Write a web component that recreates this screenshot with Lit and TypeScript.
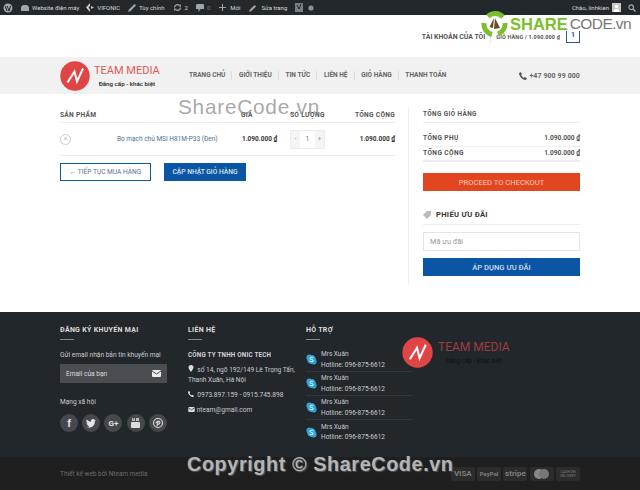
import { LitElement, html, css, svg } from "lit";
import { customElement } from "lit/decorators.js";

const skype = svg`<svg width="11" height="11" viewBox="0 0 11 11"><circle cx="3.4" cy="3.4" r="3" fill="#2ea3dc"/><circle cx="7.6" cy="7.6" r="3" fill="#2ea3dc"/><circle cx="5.5" cy="5.5" r="4.4" fill="#2ea3dc"/><path d="M7.4 3.9C6.7 3.1 3.9 3 3.9 4.4c0 1.4 3.4.8 3.4 2.3 0 1.3-2.9 1.2-3.7.3" fill="none" stroke="#fff" stroke-width="1"/></svg>`;

const nLogo = (size: number) => svg`<svg width=${size} height=${size} viewBox="0 0 30 30"><circle cx="15" cy="15" r="14.7" fill="#e04545"/><path d="M7.5 21.5 14.5 10.5 17 20.5 23 7.5" fill="none" stroke="#fff" stroke-width="2"/></svg>`;

@customElement("app-root")
export class AppRoot extends LitElement {
  static styles = css`
    :host { display: block; position: relative; width: 640px; height: 490px; overflow: hidden; background: #fff; font-family: Roboto, "Liberation Sans", sans-serif; color: #333; }
    * { box-sizing: border-box; }
    .admin { height: 15px; background: #23282d; display: flex; align-items: center; padding: 0 4px 0 3px; color: #d6d9dc; font-size: 6px; white-space: nowrap; }
    .admin .i { display: flex; align-items: center; gap: 3px; }
    .admin svg { display: block; flex: none; }
    .a1 { margin-left: 8px; } .a2 { margin-left: 7px; } .a3 { margin-left: 8px; } .a4 { margin-left: 8px; } .a5 { margin-left: 8px; } .a6 { margin-left: 9px; } .a7 { margin-left: 9px; } .a8 { margin-left: 8px; } .a9 { margin-left: 4px; }
    .g4 { gap: 4px !important; }
    .spacer { flex: 1; }
    .dim { color: #777; }
    .search { margin-left: 7px; }
    .top { height: 42px; display: flex; justify-content: flex-end; align-items: center; padding: 2px 60px 0 0; font-weight: 700; color: #555; gap: 5px; }
    .top .acc { font-size: 6.9px; }
    .top .sep { width: 1px; height: 12px; background: #e5e5e5; }
    .top .cart { font-size: 5.5px; white-space: nowrap; letter-spacing: .15px; }
    .badge { width: 14px; height: 12px; border: 1.5px solid #2a5a8a; border-top: 0; color: #2a5a8a; font-size: 7px; text-align: center; line-height: 9px; margin-left: 1px; }
    .head { height: 37px; background: #f1f1f1; padding: 0 60px; display: flex; align-items: center; }
    .brand { display: flex; gap: 4px; width: 129px; align-items: center; }
    .brand .t { color: #dd5a55; font-size: 11px; line-height: 13px; white-space: nowrap; }
    .brand .s { color: #222; font-size: 6.2px; text-align: center; line-height: 8px; margin-top: 3px; font-weight: 500; white-space: nowrap; }
    .nav { display: flex; flex: 1; font-size: 6.5px; font-weight: 700; color: #666; align-items: center; }
    .nav span { padding-right: 6px; margin-right: 6.7px; border-right: 1px solid #ddd; line-height: 9px; white-space: nowrap; }
    .nav span:last-child { border: 0; }
    .phone { display: flex; align-items: center; gap: 2px; font-size: 7px; font-weight: 700; color: #666; letter-spacing: .1px; white-space: nowrap; }
    .main { height: 218px; padding: 0 60px; display: flex; }
    .cartc { width: 335px; padding-top: 17px; }
    .hrow { display: grid; grid-template-columns: 181px 49px 62px 43px; height: 9px; font-size: 6.6px; font-weight: 700; color: #555; letter-spacing: .3px; line-height: 8px; white-space: nowrap; }
    .hline { height: 1px; border-top: 1.5px solid #ececec; margin-top: 2px; }
    .r { text-align: right; }
    .prow { display: grid; grid-template-columns: 57px 125px 35px 48px 70px; height: 33px; align-items: center; border-bottom: 1px solid #ececec; }
    .x { width: 11px; height: 11px; border: 1px solid #ccc; border-radius: 50%; color: #bbb; font-size: 7px; line-height: 9px; text-align: center; }
    .pname { color: #4f6f8f; white-space: nowrap; font-size: 6.5px; }
    .price { font-weight: 700; color: #333; font-size: 6.5px; white-space: nowrap; }
    .qty { display: flex; height: 19px; width: 35px; margin-left: 13px; border: 1px solid #ececec; color: #777; font-size: 7px; line-height: 17px; text-align: center; }
    .qty i { width: 9px; background: #f5f5f5; font-style: normal; color: #999; }
    .qty b { flex: 1; font-weight: 400; background: #fff; }
    .btns { display: flex; gap: 13px; margin-top: 7px; }
    .btn { height: 18px; display: flex; align-items: center; justify-content: center; white-space: nowrap; }
    .outl { width: 91px; border: 1.5px solid #0a5a9c; color: #5a7490; font-size: 6.6px; }
    .fill { width: 82px; background: #0b56a4; color: #dbe6f2; font-weight: 500; font-size: 6.7px; }
    .side { margin-left: 13px; width: 172px; border-left: 1px solid #ececec; padding: 1px 0 0 14px; height: 176px; margin-top: 14px; }
    .stitle { font-size: 6.4px; font-weight: 700; color: #555; letter-spacing: .4px; line-height: 10px; padding-bottom: 3px; border-bottom: 1.5px solid #ececec; }
    .srow { display: flex; justify-content: space-between; align-items: center; height: 15.5px; font-size: 6.6px; font-weight: 700; color: #555; border-bottom: 1px solid #f2f2f2; }
    .srow.first { margin-top: 8px; }
    .srow span:first-child { letter-spacing: .4px; }
    .srow.last { border-bottom: 2px solid #ececec; }
    .checkout { height: 18px; margin-top: 11px; background: #e24620; color: #f7cdbd; font-size: 7.6px; display: flex; align-items: center; justify-content: center; }
    .coupon { display: flex; align-items: center; gap: 4px; margin-top: 19px; font-size: 7.6px; font-weight: 700; color: #333; letter-spacing: .3px; padding-bottom: 5px; border-bottom: 1.5px solid #ececec; line-height: 9px; }
    .inp { height: 19px; margin-top: 7px; border: 1px solid #e5e5e5; color: #999; font-size: 7.4px; line-height: 17px; padding-left: 6px; }
    .apply { height: 18px; margin-top: 7px; background: #0b56a4; color: #cfdcec; font-size: 7.6px; font-weight: 500; display: flex; align-items: center; justify-content: center; }
    .foot { height: 145px; background: #22272c; padding: 0 60px; display: flex; position: relative; color: #c9cbcd; font-size: 6.6px; }
    .c1 { width: 128px; padding-top: 14px; } .c2 { width: 118px; padding-top: 14px; } .c3 { width: 96px; padding-top: 14px; }
    .ftitle { font-size: 7px; font-weight: 700; color: #ddd; letter-spacing: .3px; line-height: 9px; white-space: nowrap; }
    .bar { width: 14px; height: 1px; background: #888; margin: 4px 0 11px; }
    .bar.tight { margin-bottom: 8px; }
    .lh { line-height: 9px; white-space: nowrap; }
    .lh.gapped { margin-top: 15px; }
    .email { width: 107px; height: 19px; background: #4a4e53; margin-top: 4px; display: flex; align-items: center; justify-content: space-between; padding: 0 6px; color: #ddd; }
    .social { display: flex; gap: 4.2px; margin-top: 7px; }
    .social div { width: 18px; height: 18px; background: #45494e; border-radius: 50%; color: #e4e4e4; display: flex; align-items: center; justify-content: center; font: 700 11px "Liberation Sans", sans-serif; }
    .social .gp { font: 700 8px Roboto, sans-serif; }
    .c2 p { margin: 0 0 5px; line-height: 10px; white-space: nowrap; }
    .co { font-weight: 700; color: #d0d2d4; font-size: 6.3px; letter-spacing: .2px; margin-bottom: 5px; line-height: 9px; }
    .sup { display: flex; gap: 4px; height: 24px; align-items: center; width: 107px; border-bottom: 1px solid #31363b; font-size: 6.5px; line-height: 10.3px; white-space: nowrap; }
    .sup:last-child { border: 0; }
    .flogo { display: flex; align-items: flex-start; gap: 5px; margin-top: 25px; }
    .flogo .t { color: #9f3d40; font-size: 12px; line-height: 14px; margin-top: 3px; white-space: nowrap; }
    .flogo .s { color: #0e1114; font-size: 6.3px; text-align: center; line-height: 8px; margin-top: 3px; white-space: nowrap; }
    .bottom { height: 33px; background: #1f1f1f; padding: 0 60px; display: flex; align-items: center; justify-content: space-between; font-size: 6.5px; color: #6b6b6b; }
    .pays { display: flex; gap: 2.3px; }
    .pays div { width: 24px; height: 14px; background: #2c2c2c; border-radius: 2px; color: #7d7d7d; font-size: 8px; font-weight: 700; display: flex; align-items: center; justify-content: center; }
    .pays .pp { font-size: 6px; }
    .pays .cod { font-size: 3.5px; text-align: center; line-height: 4px; font-weight: 400; }
    .wm1 { position: absolute; left: 178px; top: 95px; font: 400 20.8px "Liberation Sans", sans-serif; letter-spacing: .75px; color: rgba(125,125,125,.68); white-space: nowrap; }
    .wm2 { position: absolute; left: 187px; top: 453px; font: 700 19.9px "Liberation Sans", sans-serif; letter-spacing: .55px; color: #b5b5b5; white-space: nowrap; text-shadow: 1px 1px 1px #555; }
    .wm3 { position: absolute; left: 481px; top: 10px; display: flex; align-items: center; gap: 2px; white-space: nowrap; color: #777; }
    .wm3 b { color: #7cbf2e; font: 700 16.5px "Liberation Sans", sans-serif; }
    .wm3 span { font: 400 15.5px "Liberation Sans", sans-serif; letter-spacing: -.6px; }
  `;

  render() {
    const sup = html`<div class="sup">${skype}<div>Mrs Xuân<br />Hotline: 096-875-6612</div></div>`;
    return html`
      <div class="admin">
        <svg width="10" height="10" viewBox="0 0 10 10"><circle cx="5" cy="5" r="4.5" fill="#a0a5aa"/><path d="M2.2 3 4 8M4.2 3 6 8 7.6 3" stroke="#23282d" fill="none"/></svg>
        <div class="i a1"><svg width="8" height="8" viewBox="0 0 8 8"><path d="M0 7V3l2-2h4l2 2v4z" fill="#a0a5aa"/></svg>Website điện máy</div>
        <div class="i a2"><svg width="8" height="9" viewBox="0 0 8 9"><path d="M4 0 0 4.5 4 9V6.5L2.5 4.5 4 3zM5 3l3 1.5L5 6z" fill="#ccc"/></svg>VIFONIC</div>
        <div class="i a3"><svg width="8" height="8" viewBox="0 0 8 8"><path d="M0 8 1 5.5 6.5 0 8 1.5 2.5 7z" fill="#a0a5aa"/></svg>Tùy chỉnh</div>
        <div class="i a4"><svg width="9" height="9" viewBox="0 0 9 9"><path d="M1.5 4.5a3 3 0 0 1 5-2M7.500 4.5a3 3 0 0 1-5 2" fill="none" stroke="#a0a5aa" stroke-width="1.3"/><path d="M5.5 3.5H8V1zM3.5 5.5H1V8z" fill="#a0a5aa"/></svg>2</div>
        <div class="i a5"><svg width="8" height="8" viewBox="0 0 8 8"><path d="M1 0h6a1 1 0 0 1 1 1v4H4.500L2.500 8V5H0V1z" fill="#a0a5aa"/></svg><span class="dim">0</span></div>
        <div class="i g4 a6"><svg width="7" height="7" viewBox="0 0 7 7"><path d="M3 0h1v3h3v1H4v3H3V4H0V3h3z" fill="#a0a5aa"/></svg>Mới</div>
        <div class="i g4 a7"><svg width="8" height="8" viewBox="0 0 8 8"><path d="M0 8 1 5.500 5.500 1 7 2.500 2.500 7z" fill="#a0a5aa"/></svg>Sửa trang</div>
        <div class="i a8"><svg width="9" height="9" viewBox="0 0 9 9"><rect width="8" height="9" fill="#7a7f84"/><path d="M2 2 4 6 6 1" stroke="#23282d" fill="none"/></svg></div>
        <div class="i a9"><svg width="6" height="6" viewBox="0 0 6 6"><circle cx="3" cy="3" r="2.600" fill="#8a8f94"/></svg></div>
        <div class="spacer"></div>
        <div class="i">Chào, linhkien <svg width="9" height="9" viewBox="0 0 9 9"><rect width="9" height="9" fill="#c8c8c8"/><circle cx="4.500" cy="3.500" r="1.700" fill="#fff"/><path d="M1.500 9a3 3 0 0 1 6 0z" fill="#fff"/></svg></div>
        <svg class="search" width="8" height="8" viewBox="0 0 8 8"><circle cx="3.200" cy="3.200" r="2.300" fill="none" stroke="#a0a5aa" stroke-width="1.200"/><path d="M5 5 7.600 7.600" stroke="#a0a5aa" stroke-width="1.400"/></svg>
      </div>

      <div class="top">
        <span class="acc">TÀI KHOẢN CỦA TÔI</span><span class="sep"></span>
        <span class="cart">GIỎ HÀNG / 1.090.000 ₫</span>
        <span class="badge">1</span>
      </div>

      <div class="head">
        <div class="brand">
          ${nLogo(30)}
          <div><div class="t">TEAM MEDIA</div><div class="s">Đẳng cấp - khác biệt</div></div>
        </div>
        <div class="nav"><span>TRANG CHỦ</span><span>GIỚI THIỆU</span><span>TIN TỨC</span><span>LIÊN HỆ</span><span>GIỎ HÀNG</span><span>THANH TOÁN</span></div>
        <div class="phone"><svg width="8" height="8" viewBox="0 0 8 8"><path d="M1.500 0 3 2 2.200 3.200C2.800 4.400 3.600 5.200 4.800 5.800L6 5 8 6.500 7 8C3.500 8 0 4.500 0 1z" fill="#555"/></svg>+47 900 99 000</div>
      </div>

      <div class="main">
        <div class="cartc">
          <div class="hrow"><span>SẢN PHẨM</span><span>GIÁ</span><span>SỐ LƯỢNG</span><span class="r">TỔNG CỘNG</span></div>
          <div class="hline"></div>
          <div class="prow">
            <div class="x">×</div>
            <div class="pname">Bo mạch chủ MSI H81M-P33 (Đen)</div>
            <div class="price r">1.090.000 ₫</div>
            <div class="qty"><i>-</i><b>1</b><i>+</i></div>
            <div class="price r">1.090.000 ₫</div>
          </div>
          <div class="btns">
            <div class="btn outl">← TIẾP TỤC MUA HÀNG</div>
            <div class="btn fill">CẬP NHẬT GIỎ HÀNG</div>
          </div>
        </div>
        <div class="side">
          <div class="stitle">TỔNG GIỎ HÀNG</div>
          <div class="srow first"><span>TỔNG PHỤ</span><span>1.090.000 ₫</span></div>
          <div class="srow last"><span>TỔNG CỘNG</span><span>1.090.000 ₫</span></div>
          <div class="checkout">PROCEED TO CHECKOUT</div>
          <div class="coupon"><svg width="9" height="8" viewBox="0 0 9 8"><path d="M0 4 4 0h4v4L4 8z" fill="#bbb"/></svg>PHIẾU ƯU ĐÃI</div>
          <div class="inp">Mã ưu đãi</div>
          <div class="apply">ÁP DỤNG ƯU ĐÃI</div>
        </div>
      </div>

      <div class="foot">
        <div class="c1">
          <div class="ftitle">ĐĂNG KÝ KHUYẾN MẠI</div>
          <div class="bar"></div>
          <div class="lh">Gửi email nhận bản tin khuyến mại</div>
          <div class="email"><span>Email của bạn</span><svg width="9" height="7" viewBox="0 0 9 7"><rect width="9" height="7" rx="1" fill="#eee"/><path d="M0 1 4.500 4 9 1" stroke="#4a4e53" fill="none"/></svg></div>
          <div class="lh gapped">Mạng xã hội</div>
          <div class="social">
            <div>f</div>
            <div><svg width="10" height="9" viewBox="0 0 9 8"><path d="M0 7c3 1.500 8 .5 8-5L9 1 8 1 7 0C5.500-.5 4 1 4.500 2.500 3 2.500 1.500 1.500.7.500 0 2 .5 3 1.300 3.700L.5 3.500C.5 4.500 1.200 5.200 2.200 5.500H1.300C1.600 6.200 2.200 6.500 3 6.600 2 7.200 1 7.200 0 7z" fill="#e4e4e4"/></svg></div>
            <div class="gp">G+</div>
            <div><svg width="9" height="10" viewBox="0 0 9 10"><path d="M1 0h1l1 2V0h1v3H1zM5 0h3v3H5z" fill="#bbb"/><rect y="4" width="9" height="6" rx="1" fill="#ddd"/></svg></div>
            <div><svg width="10" height="10" viewBox="0 0 9 9"><circle cx="4.500" cy="4.500" r="4" fill="none" stroke="#ddd"/><path d="M3.500 7.500 4.700 3M3 4.800C2.500 3 6 2 6.200 4 6.200 6 4.200 6 4 5" stroke="#ddd" fill="none"/></svg></div>
          </div>
        </div>
        <div class="c2">
          <div class="ftitle">LIÊN HỆ</div>
          <div class="bar"></div>
          <div class="co">CÔNG TY TNHH ONIC TECH</div>
          <p><svg width="6" height="7" viewBox="0 0 6 7"><path d="M3 0a2.500 2.500 0 0 1 2.500 2.500C5.500 4 3 7 3 7S.5 4 .5 2.500A2.500 2.500 0 0 1 3 0z" fill="#ddd"/></svg>&nbsp; số 14, ngõ 192/149 Lê Trọng Tấn,<br />Thanh Xuân, Hà Nội</p>
          <p><svg width="6" height="6" viewBox="0 0 8 8"><path d="M1.500 0 3 2 2.200 3.200C2.800 4.400 3.600 5.200 4.800 5.800L6 5 8 6.500 7 8C3.500 8 0 4.500 0 1z" fill="#ddd"/></svg>&nbsp; 0973.897.159 - 0915.745.898</p>
          <p><svg width="7" height="5" viewBox="0 0 9 7"><rect width="9" height="7" rx="1" fill="#ddd"/><path d="M0 1 4.500 4 9 1" stroke="#22272c" fill="none"/></svg> nteam@gmail.com</p>
        </div>
        <div class="c3">
          <div class="ftitle">HỖ TRỢ</div>
          <div class="bar tight"></div>
          ${sup}${sup}${sup}${sup}
        </div>
        <div class="flogo">
          ${nLogo(31)}
          <div><div class="t">TEAM MEDIA</div><div class="s">Đẳng cấp - khác biệt</div></div>
        </div>
      </div>

      <div class="bottom">
        <span>Thiết kế web bởi Nteam media</span>
        <div class="pays">
          <div>VISA</div>
          <div class="pp">PayPal</div>
          <div>stripe</div>
          <div><svg width="17" height="10" viewBox="0 0 17 10"><circle cx="6" cy="5" r="5" fill="#888"/><circle cx="11" cy="5" r="5" fill="#777"/></svg></div>
          <div class="cod">CASH ON<br />DELIVERY</div>
        </div>
      </div>

      <div class="wm1">ShareCode.vn</div>
      <div class="wm2">Copyright © ShareCode.vn</div>
      <div class="wm3">
        <svg width="27" height="28" viewBox="0 0 27 28"><g fill="none" stroke="#7cbf2e" stroke-width="5"><path d="M7 6.500A10.500 10.500 0 0 1 22 7"/><path d="M24 13a10.500 10.500 0 0 1-7 11"/><path d="M11 24.500A10.500 10.500 0 0 1 3 13"/></g><path d="M13 8 8.500 17 12 18zM14 8l5 10-6 1z" fill="#6b4a2a"/></svg>
        <b>SHARE</b><span>CODE.vn</span>
      </div>
    `;
  }
}
